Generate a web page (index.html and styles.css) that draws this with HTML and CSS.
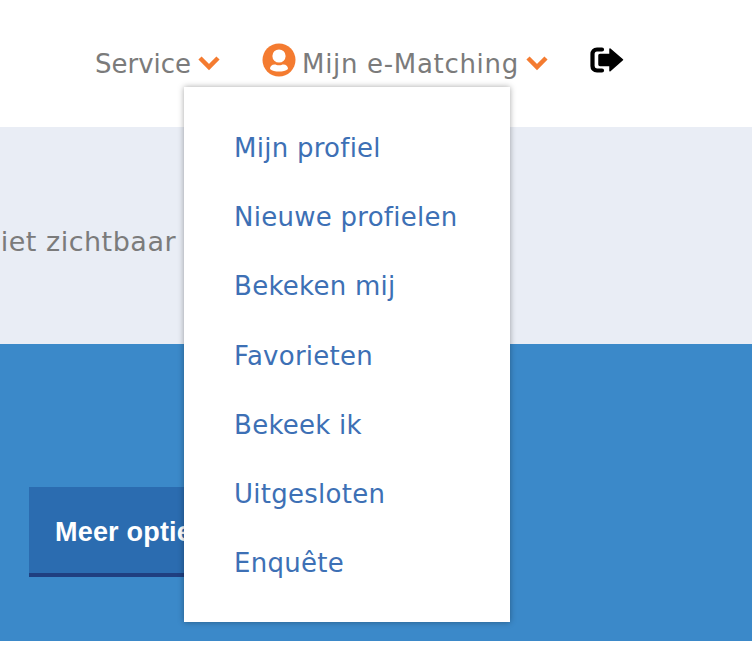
FILE: index.html
```html
<!DOCTYPE html>
<html lang="nl">
<head>
<meta charset="UTF-8">
<meta name="viewport" content="width=device-width, initial-scale=1.0">
<title>Mijn e-Matching</title>
<link rel="stylesheet" href="styles.css">
</head>
<body>

<header class="topbar">
  <nav class="nav">
    <a class="nav-link service-link" href="#">Service
      <svg class="chevron" viewBox="0 0 24 16"><path d="M3 3l9 9 9-9"/></svg>
    </a>
    <div class="account">
      <a class="nav-link account-link" href="#">
        <svg class="avatar" viewBox="0 0 34 34">
          <circle cx="17" cy="17" r="16.5" fill="#f47b30"/>
          <circle cx="17" cy="13" r="6.6" fill="#fff"/>
          <path d="M8 26c0-2.800 2-4.500 4.500-4.500 1.500 0 2.500.8 4.500.8s3-.8 4.500-.8c2.500 0 4.500 1.700 4.500 4.500-2.200 1.800-5.400 2.600-9 2.600s-6.800-.8-9-2.600z" fill="#fff"/>
        </svg>
        Mijn e-Matching
        <svg class="chevron chevron-account" viewBox="0 0 24 16"><path d="M3 3l9 9 9-9"/></svg>
      </a>
      <ul class="menu">
        <li><a href="#">Mijn profiel</a></li>
        <li><a href="#">Nieuwe profielen</a></li>
        <li><a href="#">Bekeken mij</a></li>
        <li><a href="#">Favorieten</a></li>
        <li><a href="#">Bekeek ik</a></li>
        <li><a href="#">Uitgesloten</a></li>
        <li><a href="#">Enquête</a></li>
      </ul>
    </div>
    <a class="logout" href="#">
      <svg viewBox="0 0 34 26">
        <path d="M12 2.500H7C4 2.500 2.500 4.500 2.500 7v12c0 2.500 1.500 4.500 4.500 4.500h5" fill="none" stroke="#000" stroke-width="4.200" stroke-linecap="round"/>
        <path d="M10 7.500h10V2L32.500 12.800 20 23.800v-5.300H10c-.6 0-1-.4-1-1v-9c0-.6.400-1 1-1z" stroke="#000" stroke-width="1.500" stroke-linejoin="round"/>
      </svg>
    </a>
  </nav>
</header>

<section class="notice">
  <p class="notice-text">Niet zichtbaar</p>
</section>

<section class="options">
  <button class="options-btn" type="button">Meer opties</button>
</section>

</body>
</html>
```

FILE: styles.css
```css
* {
  box-sizing: border-box;
}
html, body {
  overflow: hidden;
}
body {
  margin: 0;
  height: 654px;
  font-family: "DejaVu Sans", "Inter", sans-serif;
  background-color: #fff;
}
a {
  text-decoration: none;
}
.topbar {
  height: 127px;
  padding: 44px 0 0 95px;
}
.nav {
  display: flex;
  align-items: flex-start;
}
.nav-link {
  display: flex;
  align-items: center;
  gap: 6px;
  height: 40px;
  font-size: 26px;
  color: #7b7b7b;
  white-space: nowrap;
}
.account-link {
  letter-spacing: 0.68px;
}
.service-link {
  margin-right: 41px;
}
.account {
  position: relative;
  margin-right: 41px;
}
.avatar {
  width: 34px;
  height: 34px;
  margin-top: -8px;
}
.chevron {
  width: 24px;
  height: 16px;
  fill: none;
  stroke: #f47b30;
  stroke-width: 4.5;
  margin-top: -2px;
}
.chevron-account {
  margin-left: 0;
}
.logout {
  display: block;
  width: 34px;
  height: 26px;
  margin-top: 3px;
}
.logout svg {
  display: block;
  width: 34px;
  height: 26px;
}
.menu {
  position: absolute;
  top: 43px;
  left: -78px;
  z-index: 5;
  width: 326px;
  height: 535px;
  margin: 0;
  padding: 27px 0 0 50px;
  list-style: none;
  background-color: #fff;
  box-shadow: 0 0 6px rgba(0, 0, 0, 0.35);
}
.menu li {
  height: 69.2px;
  line-height: 69.2px;
  font-size: 26px;
  letter-spacing: 0.25px;
}
.menu a {
  color: #3d70b5;
}
.notice {
  height: 217px;
  padding-top: 99px;
  background-color: #e9edf5;
}
.notice-text {
  margin: 0 0 0 -20px;
  font-size: 27px;
  letter-spacing: 0.5px;
  color: #7b7b7b;
}
.options {
  height: 297px;
  padding: 143px 0 0 29px;
  background-color: #3b89c9;
}
.options-btn {
  display: block;
  width: 240px;
  height: 90px;
  padding: 4px 0 0 26px;
  border: none;
  border-bottom: 4px solid #1f3f80;
  font-family: "Liberation Sans", Arial, sans-serif;
  font-size: 27px;
  font-weight: bold;
  letter-spacing: 0.2px;
  text-align: left;
  color: #fff;
  background-color: #2b6cb0;
}
```
